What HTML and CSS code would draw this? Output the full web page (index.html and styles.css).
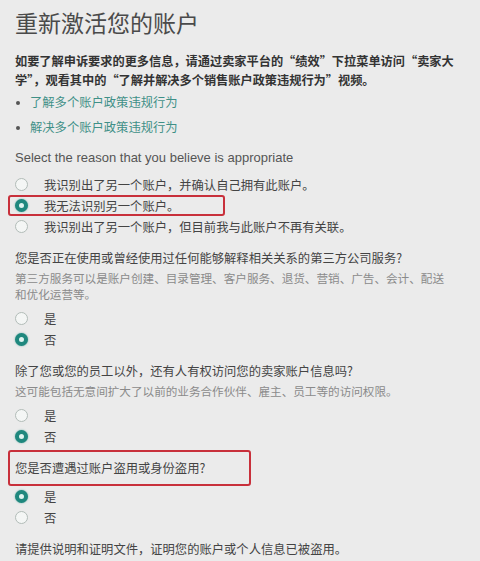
FILE: index.html
```html
<!DOCTYPE html>
<html lang="zh-CN">
<head>
  <meta charset="UTF-8">
  <meta name="viewport" content="width=device-width, initial-scale=1.0">
  <link rel="stylesheet" href="styles.css">
  <title>重新激活您的账户</title>
</head>
<body>
  <div class="page">
    <h1 class="title">重新激活您的账户</h1>

    <p class="intro">如要了解申诉要求的更多信息，请通过卖家平台的“绩效”下拉菜单访问“卖家大学”，观看其中的“了解并解决多个销售账户政策违规行为”视频。</p>

    <ul class="links">
      <li><a href="#">了解多个账户政策违规行为</a></li>
      <li><a href="#">解决多个账户政策违规行为</a></li>
    </ul>

    <form class="appeal">
      <div class="group">
        <p class="prompt">Select the reason that you believe is appropriate</p>
        <label class="option"><span class="radio"></span>我识别出了另一个账户，并确认自己拥有此账户。</label>
        <label class="option highlight short"><span class="radio checked"></span>我无法识别另一个账户。</label>
        <label class="option"><span class="radio"></span>我识别出了另一个账户，但目前我与此账户不再有关联。</label>
      </div>

      <div class="group">
        <p class="question">您是否正在使用或曾经使用过任何能够解释相关关系的第三方公司服务?</p>
        <p class="hint">第三方服务可以是账户创建、目录管理、客户服务、退货、营销、广告、会计、配送和优化运营等。</p>
        <label class="option"><span class="radio"></span>是</label>
        <label class="option"><span class="radio checked"></span>否</label>
      </div>

      <div class="group">
        <p class="question">除了您或您的员工以外，还有人有权访问您的卖家账户信息吗?</p>
        <p class="hint">这可能包括无意间扩大了以前的业务合作伙伴、雇主、员工等的访问权限。</p>
        <label class="option"><span class="radio"></span>是</label>
        <label class="option"><span class="radio checked"></span>否</label>
      </div>

      <div class="group">
        <p class="question highlight wide">您是否遭遇过账户盗用或身份盗用?</p>
        <label class="option"><span class="radio checked"></span>是</label>
        <label class="option"><span class="radio"></span>否</label>
      </div>

      <p class="question">请提供说明和证明文件，证明您的账户或个人信息已被盗用。</p>
    </form>
  </div>
</body>
</html>
```

FILE: styles.css
```css
*, *:before, *:after {
  margin: 0;
  padding: 0;
  box-sizing: border-box;
}

body {
  background: #ebebeb;
  font-family: "Noto Sans CJK SC", "Liberation Sans", sans-serif;
  color: #444;
}

.page {
  padding: 8px 25px 0 15px;
}

.title {
  font-size: 23px;
  font-weight: 400;
  line-height: 28px;
  color: #4a4a4a;
}

.intro {
  margin-top: 16px;
  font-size: 12.2px;
  line-height: 19px;
  font-weight: 700;
  color: #333;
}

.links {
  list-style: none;
}

.links li {
  position: relative;
  padding-left: 15px;
  font-size: 12.3px;
  line-height: 25px;
}

.links li:before {
  content: "";
  position: absolute;
  left: 1px;
  top: 11px;
  width: 4px;
  height: 4px;
  border-radius: 50%;
  background: #555;
}

.links a {
  color: #3f9087;
  text-decoration: none;
}

.appeal {
  margin-top: 8px;
}

.group {
  margin-bottom: 11px;
}

.prompt {
  font-family: "Liberation Sans", sans-serif;
  font-size: 13px;
  line-height: 20px;
  color: #555;
  margin-bottom: 6px;
}

.question {
  font-size: 12.3px;
  line-height: 20px;
  color: #444;
}

.hint {
  font-size: 11.6px;
  line-height: 16px;
  color: #8a8a8a;
  margin: 2px 0 6px;
}

.option {
  display: flex;
  align-items: center;
  gap: 16px;
  height: 21px;
  font-size: 12.3px;
  color: #444;
}

.radio {
  width: 13px;
  height: 13px;
  flex: none;
  border-radius: 50%;
  border: 1.5px solid #b2bcb8;
  background: #f4f6f5;
}

.radio.checked {
  border: 4px solid #1f887e;
  background: #dff4f0;
  box-shadow: 0 0 2px rgba(31, 136, 126, 0.6);
}

.highlight {
  border: 2px solid #c8303b;
  border-radius: 3px;
  margin-left: -7px;
  padding-left: 5px;
}

.highlight.short {
  width: 217px;
  height: 21px;
}

.highlight.wide {
  width: 243px;
  height: 36px;
  margin-top: -8px;
  display: flex;
  align-items: center;
}
```
